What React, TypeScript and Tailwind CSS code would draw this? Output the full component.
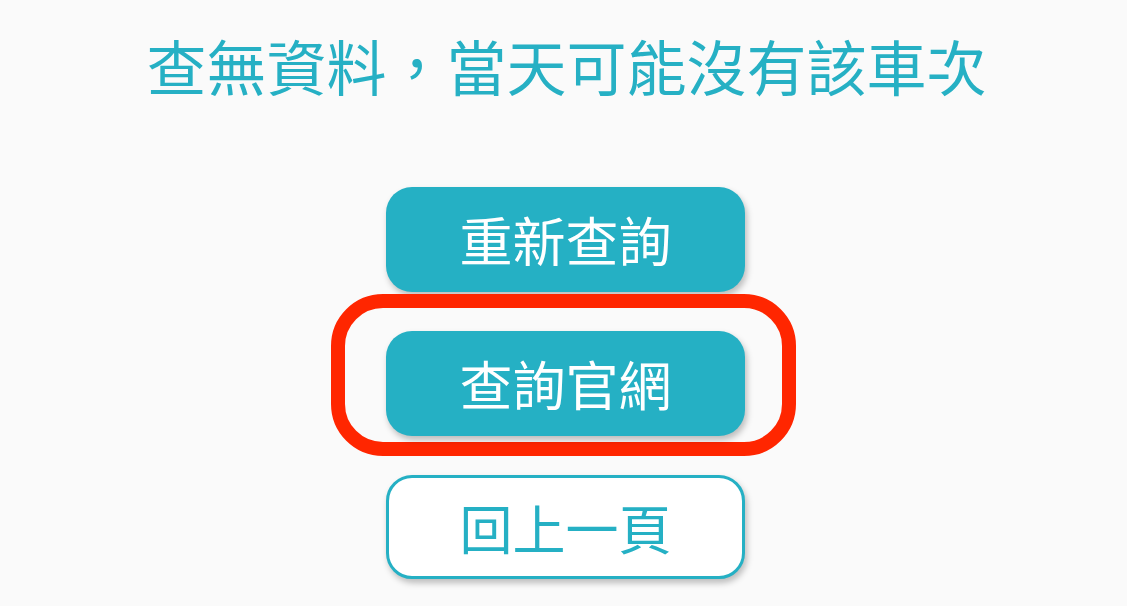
const font = { fontFamily: '"Noto Sans CJK TC", "Noto Sans", sans-serif' };

export default function App() {
  return (
    <div className="min-h-[606px] w-full bg-[#fafafa] flex flex-col items-center" style={font}>
      <h1 className="mt-[29px] text-[60px] leading-[72px] text-[#26b0c4] font-normal pl-[6px]">
        查無資料，當天可能沒有該車次
      </h1>

      <div className="mt-[86px] flex flex-col items-center gap-[39px] pl-[4px]">
        <button className="w-[359px] h-[105px] rounded-[26px] bg-[#25b0c4] text-white text-[53px] font-normal leading-none shadow-[2px_4px_6px_rgba(0,0,0,0.25)]">
          重新查詢
        </button>

        <div className="relative">
          <div className="absolute -left-[55px] -right-[51px] -top-[37px] -bottom-[20px] rounded-[52px] border-[14px] border-[#ff2600] pointer-events-none" />
          <button className="relative w-[359px] h-[105px] rounded-[26px] bg-[#25b0c4] text-white text-[53px] font-normal leading-none shadow-[2px_4px_6px_rgba(0,0,0,0.25)]">
            查詢官網
          </button>
        </div>

        <button className="w-[359px] h-[104px] rounded-[26px] bg-white border-[3px] border-[#25b0c4] text-[#25b0c4] text-[53px] font-normal leading-none shadow-[2px_4px_6px_rgba(0,0,0,0.25)]">
          回上一頁
        </button>
      </div>
    </div>
  );
}
